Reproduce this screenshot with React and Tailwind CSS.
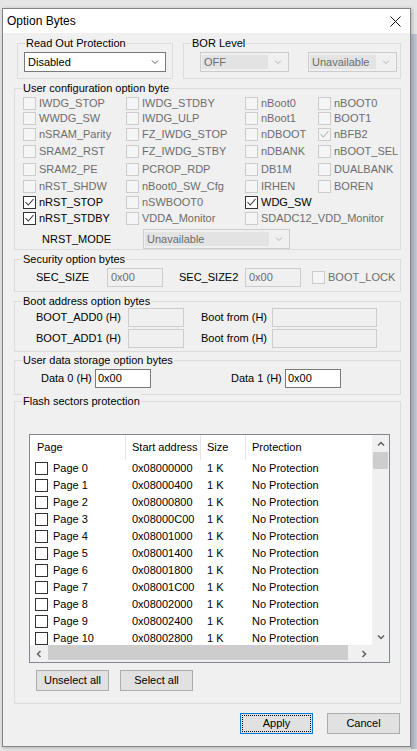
import React from "react";

const cfgRows = [
  { h: "h-[16px]", items: [{ l: "IWDG_STOP" }, { l: "IWDG_STDBY" }, { l: "nBoot0" }, { l: "nBOOT0" }] },
  { h: "h-[15px]", items: [{ l: "WWDG_SW" }, { l: "IWDG_ULP" }, { l: "nBoot1" }, { l: "BOOT1" }] },
  { h: "h-[17px]", items: [{ l: "nSRAM_Parity" }, { l: "FZ_IWDG_STOP" }, { l: "nDBOOT" }, { l: "nBFB2", c: true }] },
  { h: "h-[17px]", items: [{ l: "SRAM2_RST" }, { l: "FZ_IWDG_STBY" }, { l: "nDBANK" }, { l: "nBOOT_SEL" }] },
  { h: "h-[18px]", items: [{ l: "SRAM2_PE" }, { l: "PCROP_RDP" }, { l: "DB1M" }, { l: "DUALBANK" }] },
  { h: "h-[16px]", items: [{ l: "nRST_SHDW" }, { l: "nBoot0_SW_Cfg" }, { l: "IRHEN" }, { l: "BOREN" }] },
  { h: "h-[16px]", items: [{ l: "nRST_STOP", c: true, e: true }, { l: "nSWBOOT0" }, { l: "WDG_SW", c: true, e: true }, null] },
  { h: "h-[16px]", items: [{ l: "nRST_STDBY", c: true, e: true }, { l: "VDDA_Monitor" }, { l: "SDADC12_VDD_Monitor" }, null] },
];

const colW = ["w-[103px]", "w-[119px]", "w-[73px]", "flex-1"];

const pages = Array.from({ length: 11 }, (_, i) => ({
  name: `Page ${i}`,
  addr: "0x" + (0x08000000 + i * 0x400).toString(16).toUpperCase().padStart(8, "0"),
}));

function Tick({ color }) {
  return (
    <svg width="11" height="11" viewBox="0 0 11 11" className="block">
      <path d="M1.5 5 L4.2 8 L9.5 2" fill="none" stroke={color} strokeWidth="1.1" />
    </svg>
  );
}

function Box({ checked, enabled }) {
  return (
    <span
      className={
        enabled
          ? "flex h-[13px] w-[13px] shrink-0 items-center justify-center border border-[#333333] bg-white"
          : "flex h-[13px] w-[13px] shrink-0 items-center justify-center border border-[#cccccc] bg-[#f5f5f5]"
      }
    >
      {checked && <Tick color={enabled ? "#333333" : "#b8b8b8"} />}
    </span>
  );
}

function Opt({ label, checked, enabled, className = "" }) {
  return (
    <div className={`flex items-center gap-[3px] whitespace-nowrap ${className}`}>
      <Box checked={checked} enabled={enabled} />
      <span className={enabled ? "text-black" : "text-[#6d6d6d]"}>{label}</span>
    </div>
  );
}

function Arrow({ dir, color = "#606060", thin }) {
  const d = {
    down: "M1 1.5 L4 4.5 L7 1.5",
    up: "M1 4.5 L4 1.5 L7 4.5",
    left: "M4.5 1 L1.5 4 L4.5 7",
    right: "M1.5 1 L4.5 4 L1.5 7",
  }[dir];
  const horiz = dir === "left" || dir === "right";
  return (
    <svg width={horiz ? 6 : 8} height={horiz ? 8 : 6} viewBox={horiz ? "0 0 6 8" : "0 0 8 6"} className="block">
      <path d={d} fill="none" stroke={color} strokeWidth={thin ? 1 : 1.5} />
    </svg>
  );
}

function Combo({ value, enabled, className = "" }) {
  return (
    <div
      className={`flex h-[20px] items-center border ${
        enabled ? "border-[#7a7a7a] bg-white" : "border-[#cccccc] bg-[#f0f0f0] text-[#6d6d6d]"
      } ${className}`}
    >
      {enabled ? (
        <span className="flex-1 pl-[3px]">{value}</span>
      ) : (
        <span className="ml-[1px] flex h-[14px] flex-1 items-center bg-[#e3e3e3] pl-[2px]">{value}</span>
      )}
      <span className="flex w-[20px] justify-center">
        <Arrow dir="down" color={enabled ? "#5a5a5a" : "#b5b5b5"} thin />
      </span>
    </div>
  );
}

function Field({ value, enabled, className = "" }) {
  return (
    <div
      className={`flex h-[19px] items-center border pl-[2px] ${
        enabled ? "border-[#7a7a7a] bg-white" : "border-[#cccccc] bg-[#f0f0f0] text-[#6d6d6d]"
      } ${className}`}
    >
      {value}
    </div>
  );
}

function Group({ title, className = "", children }) {
  return (
    <fieldset className={`border border-[#dcdcdc] ${className}`}>
      <legend className="ml-[7px] bg-[#f0f0f0] px-[1px] leading-[14px]">{title}</legend>
      {children}
    </fieldset>
  );
}

function Btn({ children, focus }) {
  return (
    <button
      className={
        focus
          ? "flex h-[21px] w-[73px] items-center justify-center border border-[#0078d7] bg-[#e1e1e1] outline-1 outline-offset-[-3px] outline-black outline-dotted"
          : "flex h-[21px] w-[73px] items-center justify-center border border-[#adadad] bg-[#e1e1e1]"
      }
    >
      {children}
    </button>
  );
}

export default function App() {
  return (
    <div className="flex min-h-screen bg-[#e6e6e6] pl-[2px] pt-[8px] font-['Liberation_Sans',Arial,sans-serif] text-[11px] leading-[13px] text-black">
      <div className="flex h-[739px] w-[409px] shrink-0 flex-col border border-[#858585] bg-[#f0f0f0] shadow-[1px_1px_4px_rgba(0,0,0,0.25)]">
        <div className="flex h-[24px] shrink-0 items-center justify-between bg-white pl-[4px] pr-[9px] text-[12px]">
          <span>Option Bytes</span>
          <svg width="11" height="11" viewBox="0 0 11 11" className="block">
            <path d="M0.5 0.5 L10.5 10.5 M10.5 0.5 L0.5 10.5" stroke="#111" strokeWidth="1" />
          </svg>
        </div>

        <div className="mt-[3px] flex">
          <Group title="Read Out Protection" className="ml-[14px] w-[156px] pb-[6px]">
            <Combo value="Disabled" enabled className="ml-[6px] mt-[2px] w-[142px]" />
          </Group>
          <Group title="BOR Level" className="ml-[10px] w-[218px] pb-[6px]">
            <div className="mt-[2px] flex">
              <Combo value="OFF" className="ml-[16px] w-[89px]" />
              <Combo value="Unavailable" className="ml-[19px] w-[89px]" />
            </div>
          </Group>
        </div>

        <Group title="User configuration option byte" className="ml-[11px] mt-[2px] w-[387px]">
          {cfgRows.map((row, ri) => (
            <div key={ri} className={`flex items-center pl-[8px] ${row.h}`}>
              {row.items.map((it, ci) => (
                <div key={ci} className={colW[ci]}>
                  {it && <Opt label={it.l} checked={it.c} enabled={it.e} />}
                </div>
              ))}
            </div>
          ))}
          <div className="mt-[3px] flex h-[20px] items-center pl-[27px]">
            <span className="w-[101px]">NRST_MODE</span>
            <Combo value="Unavailable" className="w-[147px]" />
          </div>
        </Group>

        <Group title="Security option bytes" className="ml-[11px] mt-[2px] w-[387px] pb-[4px]">
          <div className="mt-[2px] flex items-center pl-[21px]">
            <span className="w-[71px]">SEC_SIZE</span>
            <Field value="0x00" className="w-[56px] pl-[3px]" />
            <span className="ml-[16px] w-[66px]">SEC_SIZE2</span>
            <Field value="0x00" className="w-[56px] pl-[3px]" />
            <Opt label="BOOT_LOCK" className="ml-[11px]" />
          </div>
        </Group>

        <Group title="Boot address option bytes" className="ml-[11px] mt-[2px] w-[387px] pb-[3px]">
          <div className="flex items-center pl-[21px]">
            <span className="w-[92px]">BOOT_ADD0 (H)</span>
            <Field className="w-[56px]" />
            <span className="ml-[17px] w-[71px]">Boot from (H)</span>
            <Field className="w-[105px]" />
          </div>
          <div className="mt-[2px] flex items-center pl-[21px]">
            <span className="w-[92px]">BOOT_ADD1 (H)</span>
            <Field className="w-[56px]" />
            <span className="ml-[17px] w-[71px]">Boot from (H)</span>
            <Field className="w-[105px]" />
          </div>
        </Group>

        <Group title="User data storage option bytes" className="ml-[11px] mt-[1px] w-[387px] pb-[6px]">
          <div className="mt-[2px] flex items-center pl-[26px]">
            <span className="w-[54px]">Data 0 (H)</span>
            <Field value="0x00" enabled className="w-[56px]" />
            <span className="ml-[80px] w-[54px]">Data 1 (H)</span>
            <Field value="0x00" enabled className="w-[56px]" />
          </div>
        </Group>

        <Group title="Flash sectors protection" className="-mt-[1px] ml-[11px] w-[387px] pb-[12px]">
          <div className="ml-[14px] mt-[26px] flex h-[229px] w-[361px] flex-col border border-[#828790] bg-white">
            <div className="flex h-[210px]">
              <div className="flex-1 overflow-hidden">
                <div className="flex h-[25px] items-center">
                  <div className="flex h-full w-[96px] items-center border-r border-[#e5e5e5] pl-[7px]">Page</div>
                  <div className="flex h-full w-[75px] items-center border-r border-[#e5e5e5] pl-[6px]">Start address</div>
                  <div className="flex h-full w-[45px] items-center border-r border-[#e5e5e5] pl-[6px]">Size</div>
                  <div className="flex h-full items-center pl-[6px]">Protection</div>
                </div>
                {pages.map((p) => (
                  <div key={p.name} className="flex h-[17px] items-center whitespace-nowrap">
                    <div className="flex w-[96px] items-center gap-[5px] pl-[5px]">
                      <Box enabled />
                      <span>{p.name}</span>
                    </div>
                    <div className="w-[75px] pl-[6px]">{p.addr}</div>
                    <div className="w-[45px] pl-[6px]">1 K</div>
                    <div className="pl-[6px]">No Protection</div>
                  </div>
                ))}
              </div>
              <div className="flex w-[17px] flex-col bg-[#f0f0f0]">
                <div className="flex h-[17px] items-center justify-center">
                  <Arrow dir="up" />
                </div>
                <div className="ml-[1px] h-[17px] w-[15px] bg-[#cdcdcd]" />
                <div className="flex-1" />
                <div className="flex h-[17px] items-center justify-center">
                  <Arrow dir="down" />
                </div>
              </div>
            </div>
            <div className="flex h-[17px]">
              <div className="flex flex-1 items-center bg-[#f0f0f0]">
                <div className="flex w-[17px] justify-center">
                  <Arrow dir="left" />
                </div>
                <div className="ml-[1px] h-[15px] w-[300px] self-start bg-[#cdcdcd]" />
                <div className="flex-1" />
                <div className="flex w-[17px] justify-center">
                  <Arrow dir="right" />
                </div>
              </div>
              <div className="w-[17px] bg-[#f0f0f0]" />
            </div>
          </div>
          <div className="ml-[21px] mt-[7px] flex gap-[11px]">
            <Btn>Unselect all</Btn>
            <Btn>Select all</Btn>
          </div>
        </Group>

        <div className="mt-[9px] flex justify-end gap-[14px] pr-[10px]">
          <Btn focus>Apply</Btn>
          <Btn>Cancel</Btn>
        </div>
      </div>
      <div className="mt-[26px] h-[715px] flex-1 bg-gradient-to-r from-[#9ea6b3] to-[#c6cbd3]" />
    </div>
  );
}
